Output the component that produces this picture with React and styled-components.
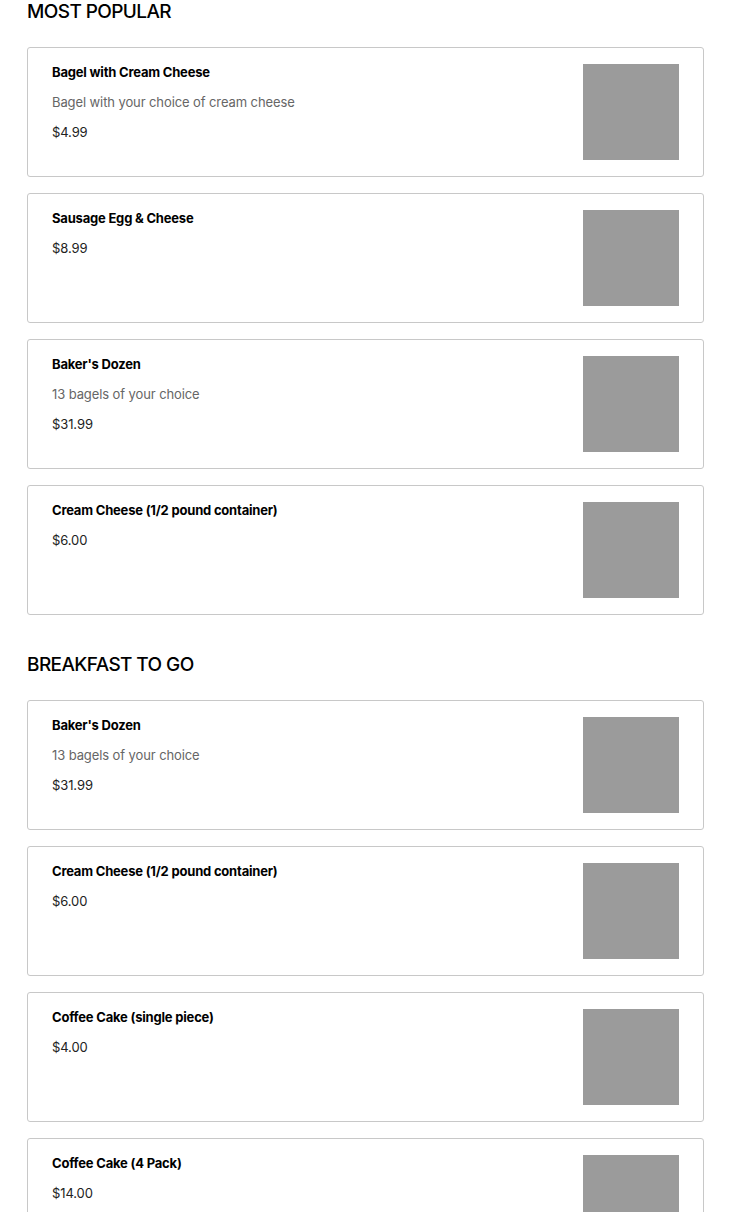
import React from "react";
import styled, { createGlobalStyle } from "styled-components";

const sections = [
 {
  title: "MOST POPULAR",
  items: [
   { name: "Bagel with Cream Cheese", desc: "Bagel with your choice of cream cheese", price: "$4.99" },
   { name: "Sausage Egg & Cheese", price: "$8.99" },
   { name: "Baker's Dozen", desc: "13 bagels of your choice", price: "$31.99" },
   { name: "Cream Cheese (1/2 pound container)", price: "$6.00" },
  ],
 },
 {
  title: "BREAKFAST TO GO",
  items: [
   { name: "Baker's Dozen", desc: "13 bagels of your choice", price: "$31.99" },
   { name: "Cream Cheese (1/2 pound container)", price: "$6.00" },
   { name: "Coffee Cake (single piece)", price: "$4.00" },
   { name: "Coffee Cake (4 Pack)", price: "$14.00" },
  ],
 },
];

const GlobalStyle = createGlobalStyle`
 body {
  margin: 0;
  background: #fff;
  font-family: Inter, "Open Sans", sans-serif;
  color: #000;
 }
`;

const Page = styled.div`
 padding: 0 26px 0 27px;
`;

const Section = styled.section`
 & + & {
  margin-top: 38px;
 }
`;

const Heading = styled.h2`
 margin: 0 0 23px;
 font-size: 19px;
 line-height: 24px;
 font-weight: 500;
 letter-spacing: -0.6px;
`;

const List = styled.div`
 display: flex;
 flex-direction: column;
 gap: 16px;
`;

const Card = styled.div`
 display: flex;
 justify-content: space-between;
 border: 1px solid #c8c8c8;
 border-radius: 3px;
 padding: 16px 24px;
 background: #fff;
`;

const Details = styled.div`
 display: flex;
 flex-direction: column;
 gap: 12px;
`;

const Name = styled.div`
 font-size: 13px;
 line-height: 17px;
 font-weight: 700;
 letter-spacing: -0.2px;
`;

const Desc = styled.div`
 font-size: 13px;
 line-height: 18px;
 color: #666;
 letter-spacing: -0.1px;
`;

const Price = styled.div`
 font-size: 13px;
 line-height: 18px;
 color: #222;
 letter-spacing: -0.1px;
`;

const Thumb = styled.div`
 width: 96px;
 height: 96px;
 flex-shrink: 0;
 background: #9b9b9b;
`;

const App = () => {
 return (
  <>
   <GlobalStyle />
   <Page>
    {sections.map((section) => (
     <Section key={section.title}>
      <Heading>{section.title}</Heading>
      <List>
       {section.items.map((item, i) => (
        <Card key={i}>
         <Details>
          <Name>{item.name}</Name>
          {item.desc && <Desc>{item.desc}</Desc>}
          <Price>{item.price}</Price>
         </Details>
         <Thumb />
        </Card>
       ))}
      </List>
     </Section>
    ))}
   </Page>
  </>
 );
};

export default App;
